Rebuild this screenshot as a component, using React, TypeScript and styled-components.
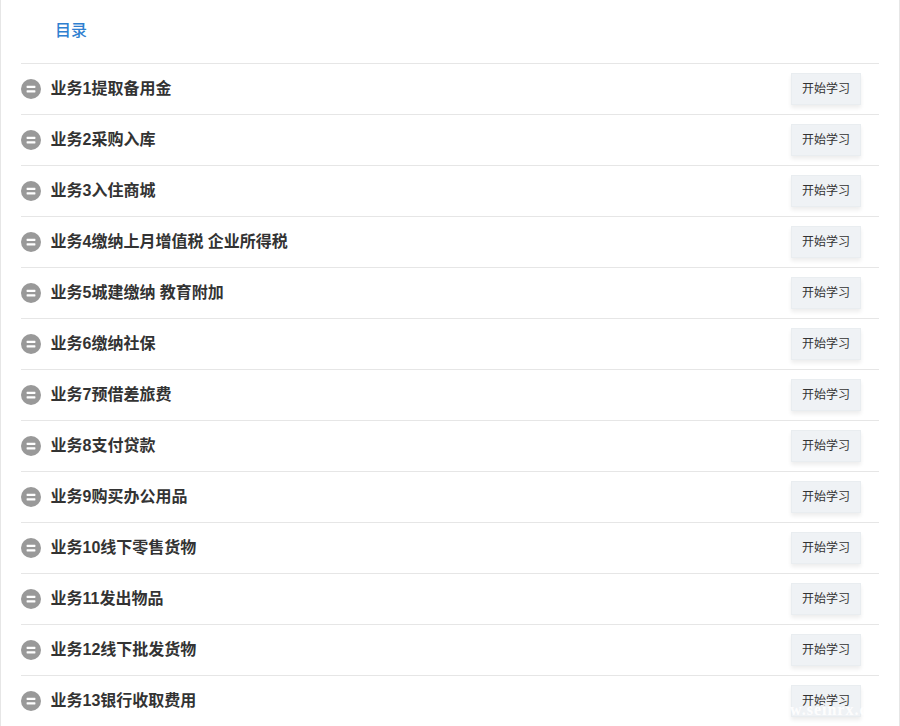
import React from "react";
import styled, { createGlobalStyle } from "styled-components";

const Global = createGlobalStyle`
  html, body { margin: 0; padding: 0; background: #fff; height: 726px; overflow: hidden; }
  body { font-family: "Liberation Sans", "Noto Sans CJK SC", sans-serif; }
`;

const Panel = styled.div`
  position: relative;
  box-sizing: border-box;
  width: 900px;
  height: 726px;
  overflow: hidden;
  background: #fff;
  border-left: 1px solid #e6e6e6;
  border-right: 1px solid #e6e6e6;
  padding: 0 20px;
`;

const Header = styled.div`
  box-sizing: border-box;
  height: 64px;
  padding: 19px 0 0 34px;
  border-bottom: 1px solid #e6e6e6;
`;

const HeaderTitle = styled.span`
  display: block;
  font-size: 16px;
  line-height: 24px;
  font-weight: 500;
  color: #2f7fd0;
`;

const List = styled.ul`
  list-style: none;
  margin: 0;
  padding: 0;
`;

const Row = styled.li`
  box-sizing: border-box;
  height: 51px;
  display: flex;
  align-items: center;
  border-bottom: 1px solid #e6e6e6;
  padding-right: 18px;
`;

const Badge = styled.span`
  flex: none;
  width: 20px;
  height: 20px;
  border-radius: 50%;
  background: #999;
  display: flex;
  margin-right: 9.5px;
`;

const RowTitle = styled.span`
  flex: 1;
  font-size: 16px;
  line-height: 24px;
  font-weight: 700;
  color: #333;
`;

const StartButton = styled.button`
  box-sizing: border-box;
  flex: none;
  width: 70px;
  height: 32px;
  padding: 0 0 3px 0;
  border: 1px solid #e9edf0;
  background: #eff2f5;
  box-shadow: 0 3px 4px rgba(0, 0, 0, 0.07);
  font-family: inherit;
  font-size: 12px;
  color: #333;
`;

const Watermark = styled.span`
  position: absolute;
  left: 789px;
  bottom: 7px;
  font-family: "Liberation Serif", serif;
  font-size: 16px;
  line-height: 18px;
  font-weight: 700;
  letter-spacing: 1px;
  color: rgba(255, 255, 255, 0.9);
`;

const items = [
  "业务1提取备用金",
  "业务2采购入库",
  "业务3入住商城",
  "业务4缴纳上月增值税 企业所得税",
  "业务5城建缴纳 教育附加",
  "业务6缴纳社保",
  "业务7预借差旅费",
  "业务8支付贷款",
  "业务9购买办公用品",
  "业务10线下零售货物",
  "业务11发出物品",
  "业务12线下批发货物",
  "业务13银行收取费用",
];

const EqualIcon = () => (
  <svg width="20" height="20" viewBox="0 0 20 20" aria-hidden="true">
    <rect x="5.6" y="6.7" width="8.8" height="2.2" rx="0.4" fill="#fff" />
    <rect x="5.6" y="11.3" width="8.8" height="2.2" rx="0.4" fill="#fff" />
  </svg>
);

export default function App() {
  return (
    <Panel>
      <Global />
      <Header>
        <HeaderTitle>目录</HeaderTitle>
      </Header>
      <List>
        {items.map((t) => (
          <Row key={t}>
            <Badge>
              <EqualIcon />
            </Badge>
            <RowTitle>{t}</RowTitle>
            <StartButton>开始学习</StartButton>
          </Row>
        ))}
      </List>
      <Watermark>w.seinrx.c</Watermark>
    </Panel>
  );
}
